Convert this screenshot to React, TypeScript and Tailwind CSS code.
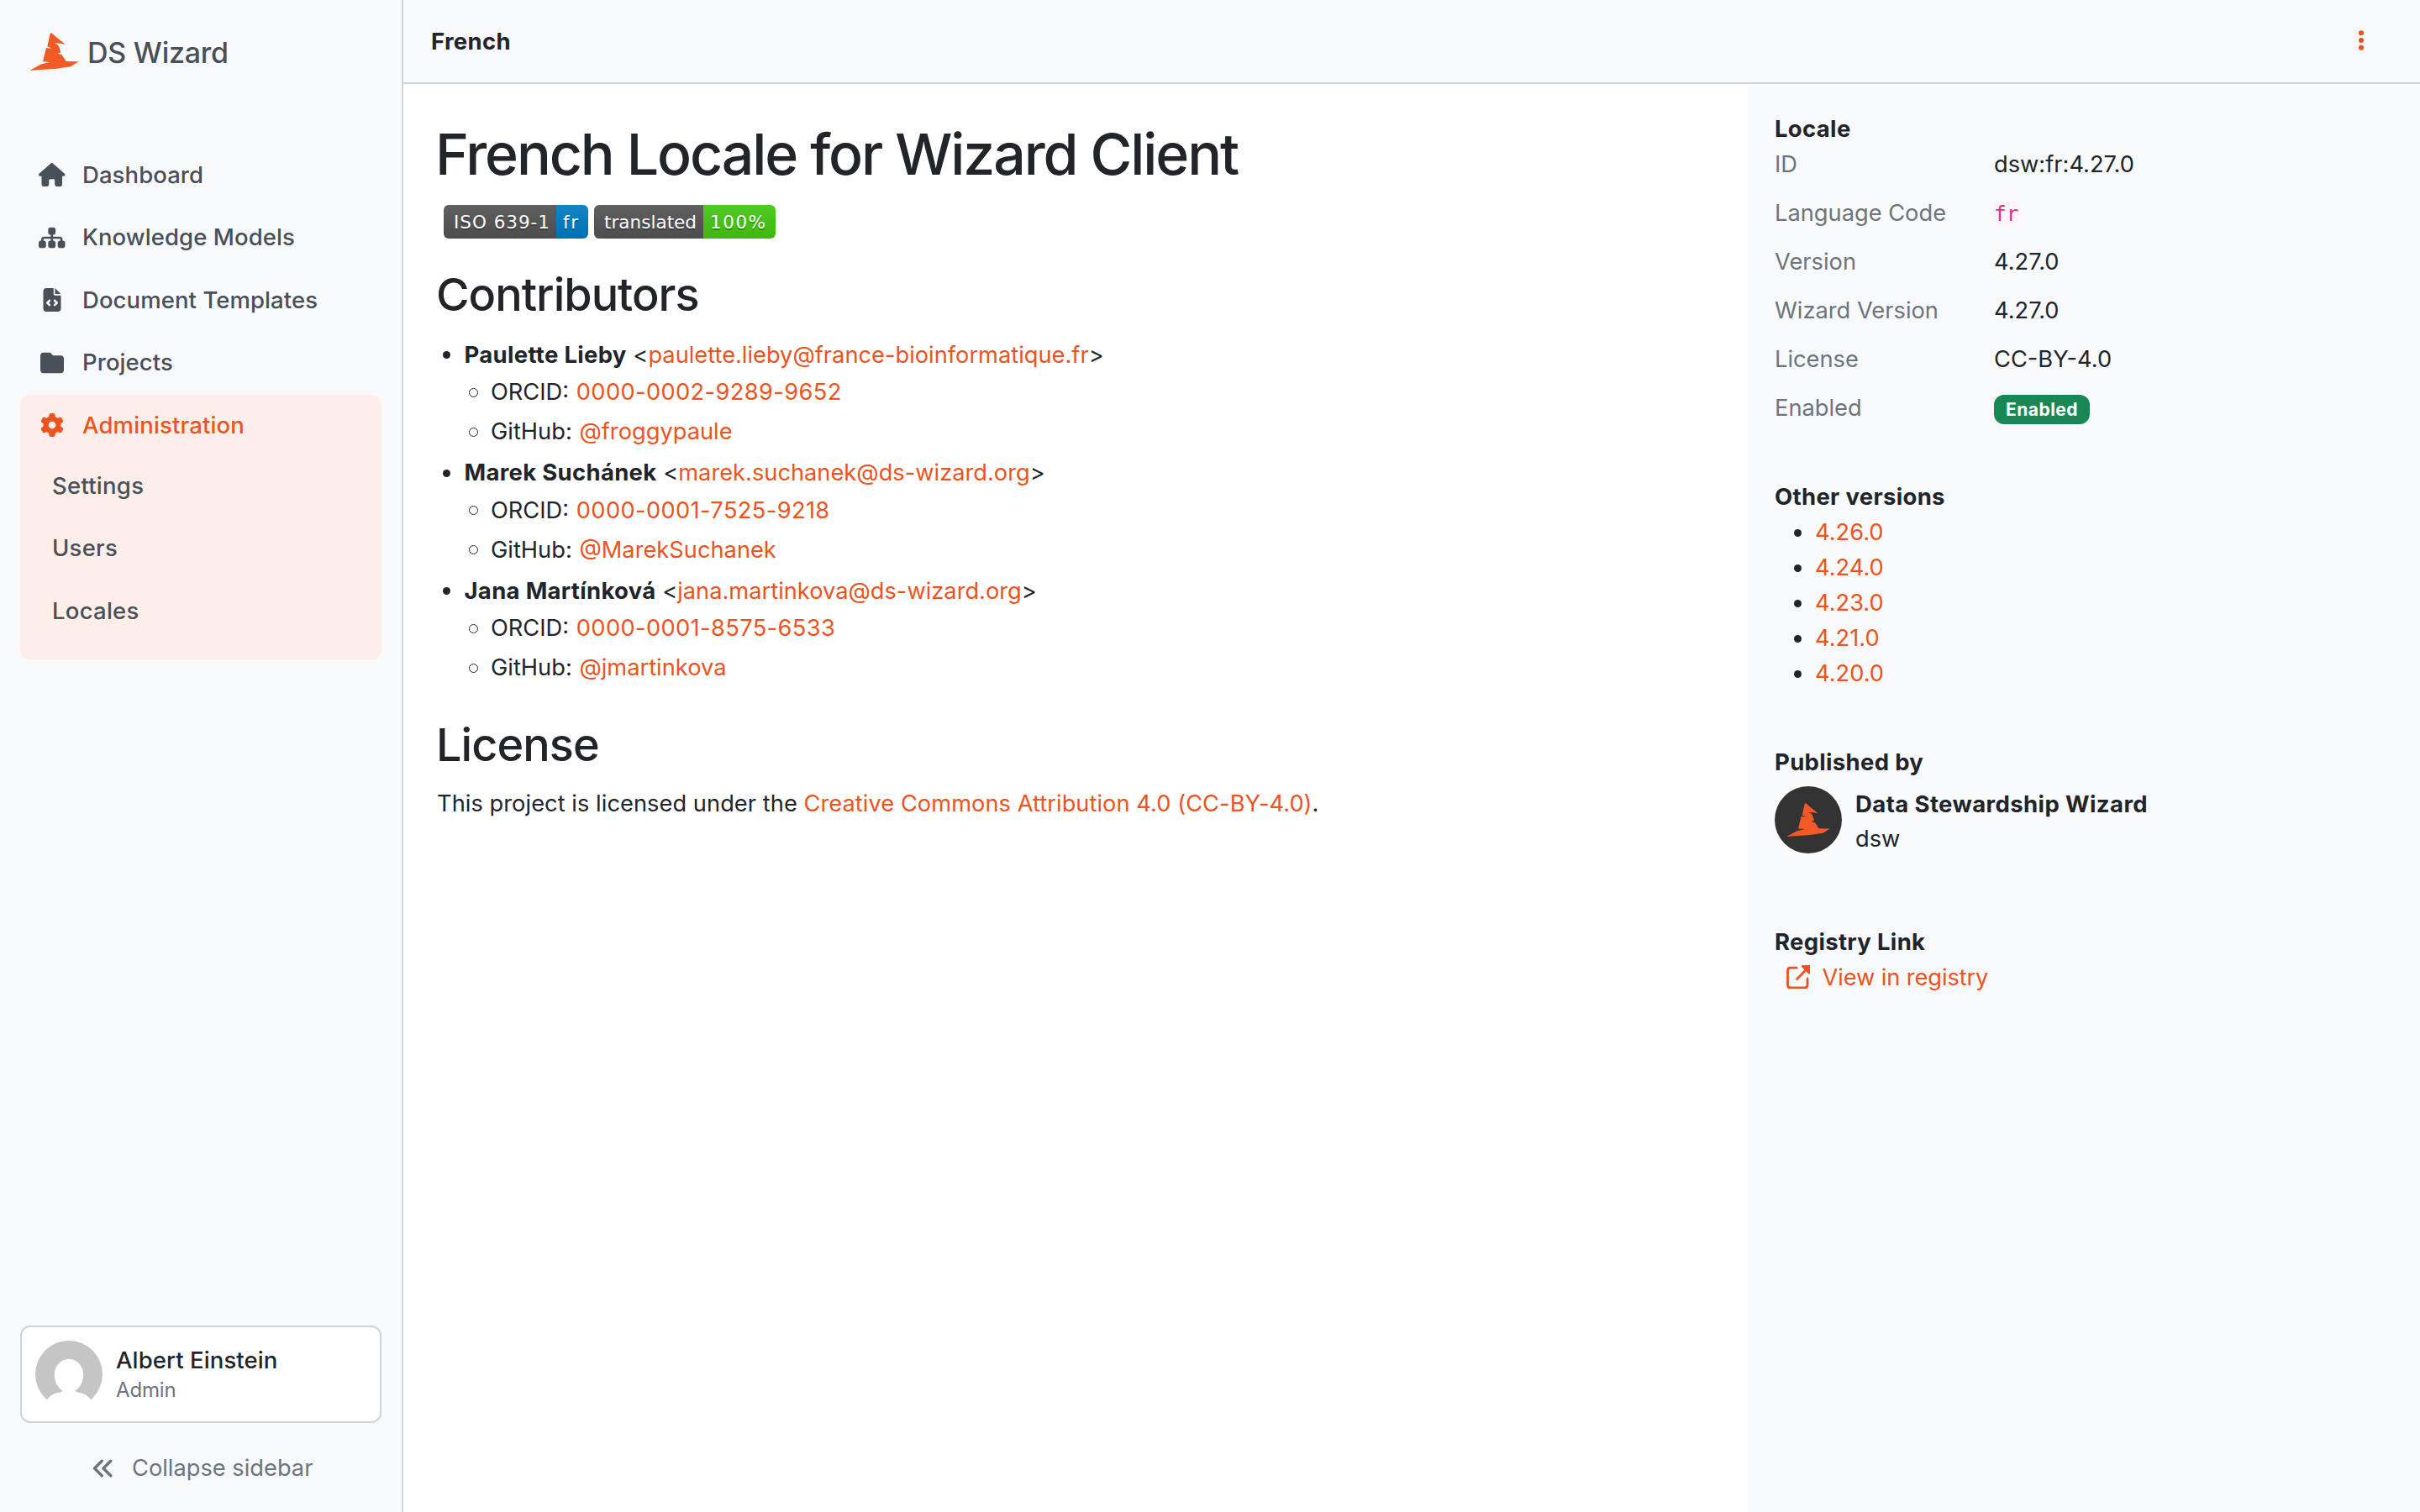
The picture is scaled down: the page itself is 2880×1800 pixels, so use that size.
import React from 'react'
import {
  FaAnglesLeft,
  FaEllipsisVertical,
  FaFileCode,
  FaFolder,
  FaGear,
  FaHouse,
  FaSitemap,
} from 'react-icons/fa6'

const menu = [
  { label: 'Dashboard', icon: <FaHouse className="w-[31.5px] h-7" /> },
  { label: 'Knowledge Models', icon: <FaSitemap className="w-[31.5px] h-7" /> },
  { label: 'Document Templates', icon: <FaFileCode className="w-7 h-7" /> },
  { label: 'Projects', icon: <FaFolder className="w-7 h-7" /> },
]

const adminMenu = ['Settings', 'Users', 'Locales']

const contributors = [
  {
    name: 'Paulette Lieby',
    email: 'paulette.lieby@france-bioinformatique.fr',
    orcid: '0000-0002-9289-9652',
    github: '@froggypaule',
  },
  {
    name: 'Marek Suchánek',
    email: 'marek.suchanek@ds-wizard.org',
    orcid: '0000-0001-7525-9218',
    github: '@MarekSuchanek',
  },
  {
    name: 'Jana Martínková',
    email: 'jana.martinkova@ds-wizard.org',
    orcid: '0000-0001-8575-6533',
    github: '@jmartinkova',
  },
]

const versions = ['4.26.0', '4.24.0', '4.23.0', '4.21.0', '4.20.0']

function WizardHat({ className }: { className?: string }) {
  return (
    <svg viewBox="0 0 175 135" className={className} fill="#f15a24">
      <path d="M73 3Q76-1 80 2L88 10L127 41L108 38L87 37L98 41Q104 46 105 52L111 70L99 74L113 78Q118 82 120 87L130 102L175 103L146 121L95 128L0 135L42 112L60 108L73 105L47 103L59 54L78 56L63 49Z" />
    </svg>
  )
}

function ExternalLinkIcon({ className }: { className?: string }) {
  return (
    <svg viewBox="0 0 86 86" className={className} fill="none" stroke="currentColor" strokeWidth={8.5} strokeLinecap="round" strokeLinejoin="round">
      <path d="M36 9.5H14Q4.5 9.5 4.5 19V72Q4.5 81.5 14 81.5H66Q75.5 81.5 75.5 72V49" />
      <path d="M38 50L72 15" />
      <path d="M58 4H82V28Z" fill="currentColor" strokeWidth={8} />
    </svg>
  )
}

function Avatar() {
  return (
    <svg viewBox="0 0 80 80" className="w-20 h-20">
      <circle cx="40" cy="40" r="40" fill="#c5c5c5" />
      <path d="M40 21.7C49.5 21.7 57.3 30 57.3 41C57.3 49 53 56 47.5 59.7C48.5 61.5 51 61.5 55 62.5C60 64 63.5 66.5 66 70.5L67 81H13L14 70.5C16.5 66.5 20 64 25 62.5C29 61.5 31.5 61.5 32.5 59.7C27 56 22.7 49 22.7 41C22.7 30 30.5 21.7 40 21.7Z" fill="#fff" />
    </svg>
  )
}

interface ShieldProps {
  id: string
  label: string
  value: string
  labelWidth: number
  valueWidth: number
  color: string
}

function Shield({ id, label, value, labelWidth, valueWidth, color }: ShieldProps) {
  const width = labelWidth + valueWidth
  const texts = [
    { text: label, x: 12, length: labelWidth - 20 },
    { text: value, x: labelWidth + 8, length: valueWidth - 20 },
  ]
  return (
    <svg width={width} height={40} viewBox={`0 0 ${width} 40`}>
      <linearGradient id={`${id}-s`} x2="0" y2="100%">
        <stop offset="0" stopColor="#bbb" stopOpacity=".1" />
        <stop offset="1" stopOpacity=".1" />
      </linearGradient>
      <clipPath id={`${id}-r`}>
        <rect width={width} height={40} rx={6} />
      </clipPath>
      <g clipPath={`url(#${id}-r)`}>
        <rect width={labelWidth} height={40} fill="#555" />
        <rect x={labelWidth} width={valueWidth} height={40} fill={color} />
        <rect width={width} height={40} fill={`url(#${id}-s)`} />
      </g>
      <g fontFamily="'DejaVu Sans', sans-serif" fontSize={21.5}>
        {texts.map(({ text, x, length }) => (
          <React.Fragment key={text}>
            <text x={x} y={30} textLength={length} fill="#010101" fillOpacity=".3">{text}</text>
            <text x={x} y={28} textLength={length} fill="#fff">{text}</text>
          </React.Fragment>
        ))}
      </g>
    </svg>
  )
}

function Sidebar() {
  return (
    <aside className="w-[480px] shrink-0 flex flex-col border-r-2 border-[#ced4da] px-6 pb-[31px] text-[#495057]">
      <div className="h-[171px] flex items-start pl-[11px] pt-[37px]">
        <WizardHat className="w-[59px] h-[45px] mt-[2px]" />
        <span className="ml-2.5 text-[34px] leading-[51px] font-medium tracking-[-0.25px]">DS Wizard</span>
      </div>

      <nav className="text-[27.5px] font-medium tracking-[0.08px]">
        {menu.map(({ label, icon }) => (
          <a key={label} className="h-[74.5px] flex items-start pt-4 pl-5">
            <span className="w-9 h-[42px] flex items-center justify-center">{icon}</span>
            <span className="ml-[18px] -mt-[0.5px]">{label}</span>
          </a>
        ))}
        <div className="mt-px h-[315px] w-[430px] rounded-xl bg-[#fdeeea]">
          <a className="h-[71.5px] flex items-start pt-[15px] pl-5 text-[#eb5420]">
            <span className="w-9 h-[42px] flex items-center justify-center">
              <FaGear className="w-7 h-7" />
            </span>
            <span className="ml-[18px] -mt-[0.5px] tracking-[0.15px]">Administration</span>
          </a>
          {adminMenu.map((label) => (
            <a key={label} className="h-[74.5px] flex items-start pt-[15px] pl-[38px] tracking-[0.25px]">{label}</a>
          ))}
        </div>
      </nav>

      <div className="mt-auto w-[430px] h-[116px] flex items-start rounded-xl border-2 border-[#ced4da] bg-white pt-4 pl-4">
        <Avatar />
        <div className="ml-4 pt-[2px]">
          <div className="text-[27.5px] font-medium tracking-[0.1px] text-[#212529]">Albert Einstein</div>
          <div className="text-[24px] leading-[36px] -mt-[3px] tracking-[-0.15px] text-[#6c757d]">Admin</div>
        </div>
      </div>

      <div className="mt-8 flex items-center pl-[85px] text-[#6c757d]">
        <FaAnglesLeft className="w-7 h-7" />
        <span className="ml-5 mt-px">Collapse sidebar</span>
      </div>
    </aside>
  )
}

function Readme() {
  return (
    <main className="w-[1600px] shrink-0 bg-white pt-[41px] pl-[39px]">
      <h1 className="-ml-px text-[68px] leading-[84px] font-medium tracking-[-2.11px]">French Locale for Wizard Client</h1>
      <div className="mt-[19px] ml-[9px] flex gap-[7px]">
        <Shield id="iso" label="ISO 639-1" value="fr" labelWidth={134} valueWidth={38} color="#007ec6" />
        <Shield id="translated" label="translated" value="100%" labelWidth={130} valueWidth={86} color="#4c1" />
      </div>

      <h2 className="mt-[33px] text-[54px] leading-[67px] font-medium tracking-[-1px]">Contributors</h2>
      <ul className="mt-[17.75px]">
        {contributors.map(({ name, email, orcid, github }) => (
          <li key={name} className="pb-[7.25px]">
            <div className="h-[42px] flex items-center">
              <span className="ml-[7.5px] mr-[17px] size-[9px] rounded-full bg-[#212529]" />
              <div>
                <strong className="text-[27.5px] leading-none font-bold tracking-[0.3px]">{name}</strong> &lt;
                <a className="text-[#eb5420]">{email}</a>&gt;
              </div>
            </div>
            <ul className="ml-[39px]">
              <li className="mt-[2.5px] flex items-center">
                <span className="mr-[15px] size-[11px] rounded-full border border-[#212529]" />
                <span>ORCID:&nbsp;</span>
                <a className="ml-px text-[#eb5420] tracking-[0.37px]">{orcid}</a>
              </li>
              <li className="mt-[4.75px] flex items-center">
                <span className="mr-[15px] size-[11px] rounded-full border border-[#212529]" />
                <span>GitHub:&nbsp;</span>
                <a className="ml-px text-[#eb5420]">{github}</a>
              </li>
            </ul>
          </li>
        ))}
      </ul>

      <h2 className="mt-[29.75px] text-[54px] leading-[67px] font-medium tracking-[-0.93px]">License</h2>
      <p className="mt-4 ml-px tracking-[0.04px]">
        This project is licensed under the{' '}
        <a className="text-[#eb5420]">Creative Commons Attribution 4.0 (CC-BY-4.0)</a>.
      </p>
    </main>
  )
}

function Title({ children }: { children: React.ReactNode }) {
  return <h3 className="-mt-px mb-px text-[27.5px] font-bold tracking-[0.32px]">{children}</h3>
}

function Row({ label, children }: { label: string; children: React.ReactNode }) {
  return (
    <div className="h-[58px] flex items-start">
      <span className="w-[261px] text-[#6c757d]">{label}</span>
      {children}
    </div>
  )
}

function Details() {
  return (
    <aside className="grow flex flex-col pt-[33px] pl-8">
      <section className="h-[438px]">
        <Title>Locale</Title>
        <Row label="ID"><span>dsw:fr:4.27.0</span></Row>
        <Row label="Language Code">
          <code className="mt-[6px] h-[30px] bg-[#fff4f9] font-['DejaVu_Sans_Mono'] text-[24.5px] leading-[32px] text-[#d63384]">fr</code>
        </Row>
        <Row label="Version"><span>4.27.0</span></Row>
        <Row label="Wizard Version"><span>4.27.0</span></Row>
        <Row label="License"><span>CC-BY-4.0</span></Row>
        <Row label="Enabled">
          <span className="mt-[5px] h-[35px] w-[114px] rounded-xl bg-[#198754] text-center text-[21px] leading-[36px] font-bold tracking-[0.5px] text-white">Enabled</span>
        </Row>
      </section>

      <section className="h-[316px]">
        <Title>Other versions</Title>
        <ul>
          {versions.map((version) => (
            <li key={version} className="flex items-center">
              <span className="ml-[23px] mr-4 size-[9px] rounded-full bg-[#212529]" />
              <a className="text-[#eb5420]">{version}</a>
            </li>
          ))}
        </ul>
      </section>

      <section className="h-[214px]">
        <Title>Published by</Title>
        <div className="mt-2 flex">
          <div className="size-20 rounded-full bg-[#333] flex items-center justify-center">
            <WizardHat className="w-[52px] h-10" />
          </div>
          <div className="ml-4">
            <div className="text-[27.5px] font-bold tracking-[0.4px]">Data Stewardship Wizard</div>
            <div>dsw</div>
          </div>
        </div>
      </section>

      <section>
        <Title>Registry Link</Title>
        <a className="flex items-center text-[#eb5420]">
          <ExternalLinkIcon className="ml-[13.5px] mr-[14.5px] w-[28.5px] h-[28.5px] -mt-[2px]" />
          <span className="tracking-[-0.1px]">View in registry</span>
        </a>
      </section>
    </aside>
  )
}

export default function App() {
  return (
    <div className="w-[2880px] h-[1800px] flex overflow-hidden bg-[#f8f9fb] font-['Inter',sans-serif] text-[27.25px] leading-[42px] text-[#212529]">
      <Sidebar />
      <div className="grow flex flex-col">
        <header className="h-[100px] shrink-0 flex items-start justify-between border-b-2 border-[#ced4da] pt-7 pl-8 pr-14">
          <span className="ml-px text-[27.5px] font-bold tracking-[0.35px]">French</span>
          <FaEllipsisVertical className="mt-[6px] w-7 h-7 text-[#eb5420]" />
        </header>
        <div className="grow flex">
          <Readme />
          <Details />
        </div>
      </div>
    </div>
  )
}
